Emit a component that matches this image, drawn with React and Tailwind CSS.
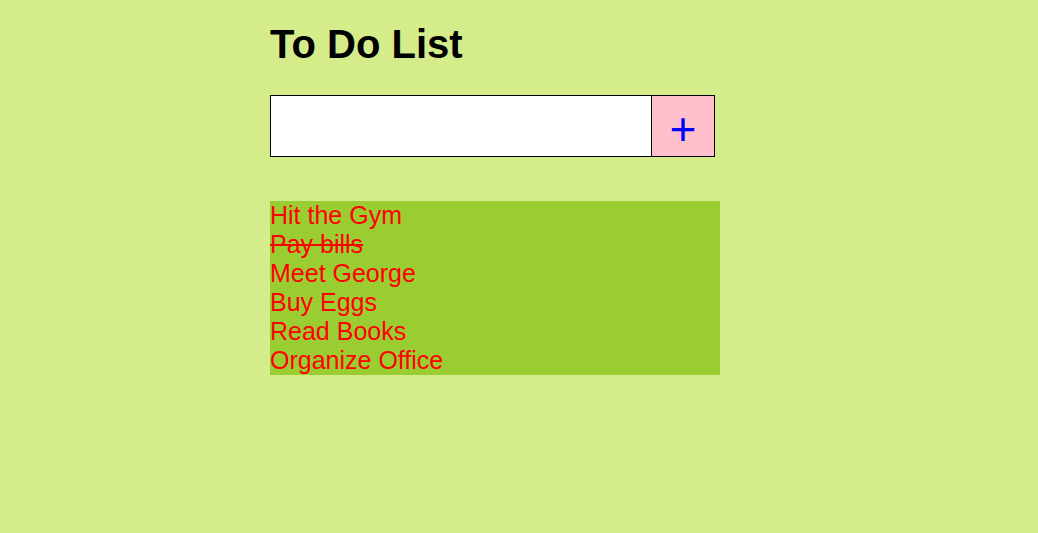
export default function App() {
  const todos = [
    { text: 'Hit the Gym', done: false },
    { text: 'Pay bills', done: true },
    { text: 'Meet George', done: false },
    { text: 'Buy Eggs', done: false },
    { text: 'Read Books', done: false },
    { text: 'Organize Office', done: false },
  ]

  return (
    <div className="min-h-[533px] w-full bg-[#d4ed8a] font-['Liberation_Sans',Arial,sans-serif]">
      <div className="ml-[270px] w-[450px] pt-[22px]">
        <h1 className="text-[40px] leading-[44px] font-bold text-black">To Do List</h1>

        {/* Input row */}
        <div className="mt-[29px] flex">
          <input
            type="text"
            className="h-[62px] w-[382px] border border-black bg-white outline-none"
          />
          <button className="flex h-[62px] w-[63px] items-center justify-center border border-l-0 border-black bg-[#ffc0cb] pt-[6px] text-[46px] leading-none text-[#0000ff]">
            +
          </button>
        </div>

        {/* List */}
        <ul className="mt-[44px] bg-[#9acd32]">
          {todos.map(t => (
            <li
              key={t.text}
              className={`text-[25px] leading-[29px] text-[#ff0000] ${t.done ? 'line-through' : ''}`}
            >
              {t.text}
            </li>
          ))}
        </ul>
      </div>
    </div>
  )
}
